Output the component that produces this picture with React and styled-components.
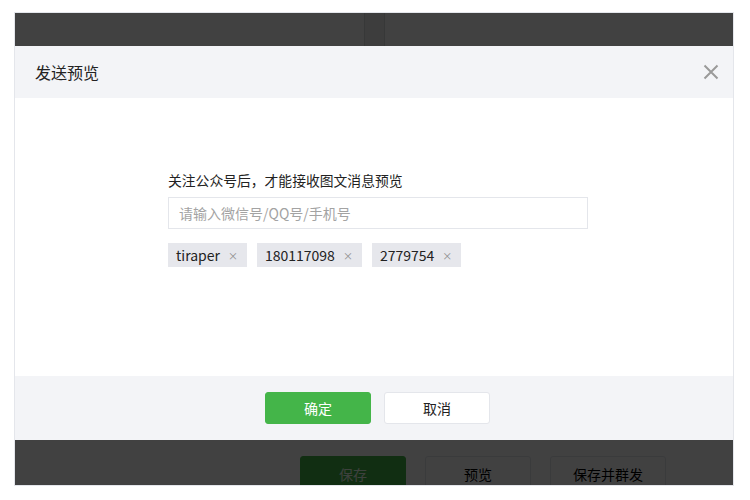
import React from 'react'
import styled, { createGlobalStyle } from 'styled-components'

const Global = createGlobalStyle`
  body {
    margin: 0;
    background: #fff;
    font-family: "Noto Sans CJK SC", "Noto Sans", "Liberation Sans", sans-serif;
  }
`

const Page = styled.div`
  padding: 12px 0 0 14px;
`

const Frame = styled.div`
  position: relative;
  width: 718px;
  height: 472px;
  border: 1px solid #e4e6eb;
  overflow: hidden;
  background: #fff;
`

const Editor = styled.div`
  display: flex;
  height: 410px;
`

const Side = styled.div`
  width: 349px;
`

const Strip = styled.div`
  width: 19px;
  background: #eeeeee;
  border-left: 1px solid #d9dadc;
  border-right: 1px solid #d9dadc;
`

const Toolbar = styled.div`
  display: flex;
  gap: 19px;
  padding: 33px 0 0 285px;
`

const ToolButton = styled.div`
  width: ${p => p.$w || 106}px;
  height: 40px;
  box-sizing: border-box;
  border-radius: 3px;
  display: flex;
  justify-content: center;
  padding-top: 8px;
  font-size: 14px;
  line-height: 18px;
  background: ${p => (p.$primary ? '#44b549' : '#fff')};
  color: ${p => (p.$primary ? '#f0fff0' : '#000')};
  border: 1px solid ${p => (p.$primary ? '#44b549' : '#e4e6eb')};
`

const Mask = styled.div`
  position: absolute;
  inset: 0;
  background: rgba(0, 0, 0, 0.745);
  padding-top: 33px;
`

const Dialog = styled.div`
  background: #fff;
  display: flex;
  flex-direction: column;
`

const Header = styled.div`
  height: 52px;
  background: #f3f4f7;
  display: flex;
  align-items: center;
  justify-content: space-between;
  padding: 0 13px 0 20px;
`

const Title = styled.h3`
  margin: 0;
  font-weight: 400;
  font-size: 16px;
  line-height: 20px;
  color: #222;
`

const Close = styled.button`
  border: 0;
  background: none;
  padding: 0;
  width: 18px;
  height: 18px;
  display: flex;
  cursor: pointer;
`

const Body = styled.div`
  height: 278px;
  box-sizing: border-box;
  padding: 72px 0 0 153px;
`

const Label = styled.p`
  margin: 0;
  font-size: 13.8px;
  line-height: 20px;
  color: #222;
`

const Input = styled.input`
  display: block;
  margin-top: 7px;
  width: 420px;
  height: 32px;
  box-sizing: border-box;
  border: 1px solid #e4e6eb;
  padding: 0 10px;
  font-family: inherit;
  font-size: 14px;
  outline: none;
  &::placeholder {
    color: #a3a3a3;
  }
`

const Tags = styled.div`
  display: flex;
  gap: 10px;
  margin-top: 14px;
`

const Tag = styled.span`
  display: inline-flex;
  align-items: center;
  height: 24px;
  padding: 0 9px 0 8px;
  background: #e6e7ec;
  font-size: 14px;
  color: #222;
`

const Remove = styled.span`
  margin-left: 8px;
  font-size: 10px;
  color: #8d8d8d;
`

const Footer = styled.div`
  height: 64px;
  background: #f3f4f7;
  display: flex;
  align-items: center;
  justify-content: center;
  gap: 13px;
  padding-left: 7px;
`

const Button = styled.button`
  width: 106px;
  height: 32px;
  border-radius: 3px;
  font-family: inherit;
  font-size: 14px;
  cursor: pointer;
  background: ${p => (p.$primary ? '#44b549' : '#fff')};
  color: ${p => (p.$primary ? '#fff' : '#222')};
  border: 1px solid ${p => (p.$primary ? '#44b549' : '#e4e6eb')};
`

const tags = ['tiraper', '180117098', '2779754']

const App = () => {
  return (
    <Page>
      <Global />
      <Frame>
        <Editor>
          <Side />
          <Strip />
        </Editor>
        <Toolbar>
          <ToolButton $primary>保存</ToolButton>
          <ToolButton>预览</ToolButton>
          <ToolButton $w={116}>保存并群发</ToolButton>
        </Toolbar>
        <Mask>
          <Dialog>
            <Header>
              <Title>发送预览</Title>
              <Close aria-label="close">
                <svg width="18" height="18" viewBox="0 0 18 18">
                  <path d="M2.5 2.5 L15.5 15.5 M15.5 2.5 L2.5 15.5" stroke="#9a9a9a" strokeWidth="2" fill="none" />
                </svg>
              </Close>
            </Header>
            <Body>
              <Label>关注公众号后，才能接收图文消息预览</Label>
              <Input placeholder="请输入微信号/QQ号/手机号" />
              <Tags>
                {tags.map(t => (
                  <Tag key={t}>
                    {t}
                    <Remove>×</Remove>
                  </Tag>
                ))}
              </Tags>
            </Body>
            <Footer>
              <Button $primary>确定</Button>
              <Button>取消</Button>
            </Footer>
          </Dialog>
        </Mask>
      </Frame>
    </Page>
  )
}

export default App
